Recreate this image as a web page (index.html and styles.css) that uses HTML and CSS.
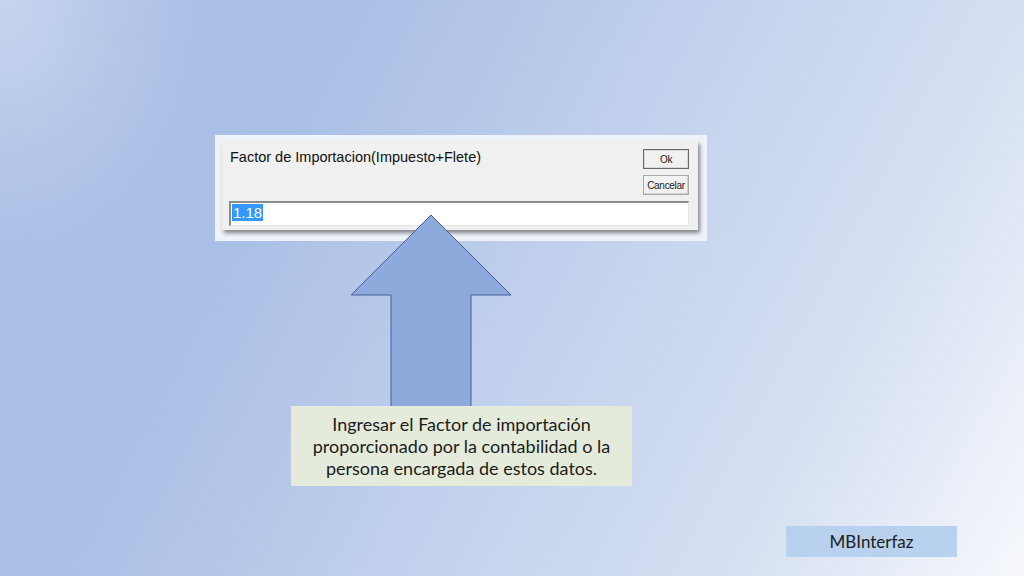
FILE: index.html
```html
<!DOCTYPE html>
<html lang="es">
<head>
<meta charset="utf-8">
<title>Factor de Importacion</title>
<link rel="stylesheet" href="styles.css">
</head>
<body>
<div class="slide">
  <div class="shot">
    <div class="dialog">
      <div class="dlg-top">
        <div class="dlg-title">Factor de Importacion(Impuesto+Flete)</div>
        <div class="dlg-buttons">
          <button class="btn btn-default">Ok</button>
          <button class="btn">Cancelar</button>
        </div>
      </div>
      <div class="dlg-input"><span class="sel">1.18</span></div>
    </div>
  </div>

  <svg class="arrow" width="164" height="198" viewBox="0 0 164 198">
    <polygon points="82,1 162,81 122,81 122,193 42,193 42,81 2,81" fill="#8eaadc" stroke="#41609a" stroke-width="1"/>
  </svg>

  <div class="note">Ingresar el Factor de importación proporcionado por la contabilidad o la persona encargada de estos datos.</div>

  <div class="brand">MBInterfaz</div>
</div>
</body>
</html>
```
FILE: styles.css
```css
html, body {
  margin: 0;
  padding: 0;
}
body {
  width: 1024px;
  height: 576px;
  overflow: hidden;
}
.slide {
  position: relative;
  width: 1024px;
  height: 576px;
  background:
    radial-gradient(ellipse 200px 260px at 0 0, rgba(200,214,238,0.95) 0%, rgba(200,214,238,0) 100%),
    linear-gradient(118deg, #a9bee6 0%, #abc0e6 28%, #c3d2ed 55%, #d6e0f2 78%, #f6f8fc 100%);
  font-family: "Lato", "Open Sans", sans-serif;
}
.shot {
  position: absolute;
  left: 215px;
  top: 135px;
  width: 492px;
  height: 106px;
  background: #eef2f9;
  box-sizing: border-box;
  padding: 6px 9px 11px 7px;
}
.dialog {
  height: 100%;
  background: #f0f0f0;
  box-shadow: 2px 3px 4px rgba(0,0,0,0.45);
  box-sizing: border-box;
  padding: 8px 9px 4px 7px;
  display: flex;
  flex-direction: column;
}
.dlg-top {
  display: flex;
  justify-content: space-between;
}
.dlg-title {
  font-family: "Liberation Sans", Arial, sans-serif;
  font-size: 14.5px;
  color: #111;
  padding-left: 1px;
  padding-top: 0;
}
.dlg-buttons {
  display: flex;
  flex-direction: column;
  gap: 6px;
}
.btn {
  width: 46px;
  height: 20px;
  padding: 0;
  margin: 0;
  background: #f1f1f1;
  border: 1px solid #a8a8a8;
  box-shadow: inset -1px -1px 0 #d0d0d0;
  font-family: "Liberation Sans", Arial, sans-serif;
  font-size: 10px;
  color: #222;
  letter-spacing: -0.3px;
}
.btn-default {
  border: 1px solid #6a6a6a;
  box-shadow: inset 0 0 0 1px #d8d8d8;
}
.dlg-input {
  margin-top: 6px;
  height: 25px;
  background: #fff;
  border-top: 2px solid #8c8c8c;
  border-left: 2px solid #8c8c8c;
  border-right: 1px solid #e4e4e4;
  border-bottom: 1px solid #e4e4e4;
  box-sizing: border-box;
  padding: 1px 0 0 1px;
  font-family: "Liberation Sans", Arial, sans-serif;
  font-size: 15px;
  line-height: 18px;
}
.sel {
  background: #3399ff;
  color: #fff;
  padding: 0 1px;
}
.arrow {
  position: absolute;
  left: 349px;
  top: 214px;
}
.note {
  position: absolute;
  left: 291px;
  top: 406px;
  width: 341px;
  height: 80px;
  box-sizing: border-box;
  padding: 7px 10px 0;
  background: #e4ebdb;
  color: #1c1c1c;
  font-size: 18px;
  line-height: 22px;
  text-align: center;
}
.brand {
  position: absolute;
  left: 786px;
  top: 526px;
  width: 171px;
  height: 31px;
  background: #b7d1ee;
  color: #1c1c1c;
  font-size: 17px;
  line-height: 31px;
  text-align: center;
}
```
